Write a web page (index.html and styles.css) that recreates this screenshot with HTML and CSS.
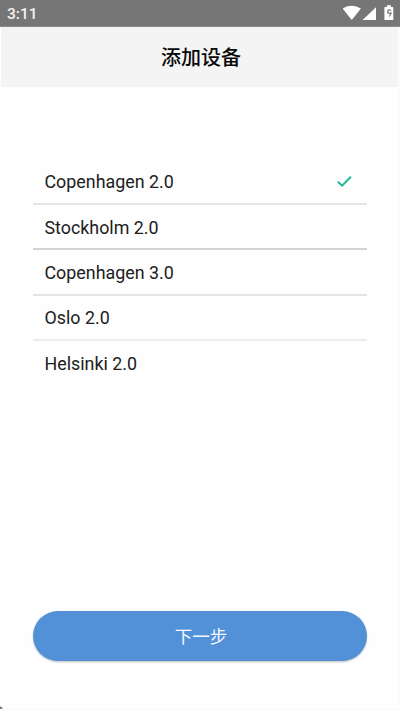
FILE: index.html
```html
<!DOCTYPE html>
<html lang="zh-CN">
<head>
<meta charset="utf-8">
<title>添加设备</title>
<link rel="stylesheet" href="styles.css">
</head>
<body>
<div class="screen">
  <div class="status">
    <span class="time">3:11</span>
    <svg class="status-icons" width="56" height="27" viewBox="0 0 56 27" fill="#fff">
      <path d="M-.4 8.5Q9 3.2 17.9 8.5L8.8 20Z"/>
      <path d="M33 7.2V20H19.5Z"/>
      <path d="M42.1 7H43.9V5.3H47.9V7H49.6Q50.3 7 50.3 7.7V19.4Q50.3 20.1 49.6 20.1H42.1Q41.4 20.1 41.4 19.4V7.7Q41.4 7 42.1 7Z"/>
      <path d="M48.2 10.2H45V13.2H48.2L46.3 16.5" fill="none" stroke="#767676" stroke-width="1.2"/>
    </svg>
  </div>
  <header class="header"><h1>添加设备</h1></header>
  <main class="content">
    <ul class="devices">
      <li><span>Copenhagen 2.0</span>
        <svg class="check" width="16" height="14" viewBox="0 0 16 14"><path d="M.8 6.8L5.1 10.7L13.9 1.8" fill="none" stroke="#22b799" stroke-width="2"/></svg>
      </li>
      <li class="strong"><span>Stockholm 2.0</span></li>
      <li><span>Copenhagen 3.0</span></li>
      <li class="light"><span>Oslo 2.0</span></li>
      <li><span>Helsinki 2.0</span></li>
    </ul>
    <button class="next">下一步</button>
  </main>
</div>
</body>
</html>
```
FILE: styles.css
```css
* { box-sizing: border-box; }
body {
  margin: 0;
  background: #fefefe;
  font-family: Roboto, "Noto Sans CJK SC", sans-serif;
  color: #202020;
}
.screen {
  height: 710px;
  display: flex;
  flex-direction: column;
  border-right: 1px solid #fafafa;
  border-bottom: 1px solid #fafafa;
  background: radial-gradient(circle at 0 100%, #777 0 2px, transparent 3px);
}
.status {
  height: 27px;
  flex: none;
  margin-right: -1px;
  padding: 0 1px 0 7px;
  display: flex;
  justify-content: space-between;
  background: #767676;
  border-bottom: 1px solid #8c8c8c;
}
.time {
  color: #f2f2f2;
  font-size: 15.5px;
  font-weight: 500;
  line-height: 28px;
}
.status-icons { display: block; }
.header {
  height: 60px;
  flex: none;
  margin: 0 1px;
  display: flex;
  align-items: center;
  justify-content: center;
  background: #f4f4f4;
}
.header h1 {
  margin: 2px 0 0 3px;
  font-size: 20px;
  font-weight: 500;
  line-height: 30px;
  color: #080808;
}
.content {
  flex: 1;
  display: flex;
  flex-direction: column;
  padding: 72px 32px 48px 33px;
}
.devices {
  margin: 0;
  padding: 0;
  list-style: none;
}
.devices li {
  height: 45.4px;
  padding: 1px 14px 0 11.5px;
  display: flex;
  align-items: center;
  justify-content: space-between;
  font-size: 17.85px;
  border-bottom: 2px solid #e4e4e4;
}
.devices li:first-child { height: 46px; }
.devices li.strong { border-color: #d2d2d2; }
.devices li.light { border-color: #ececec; }
.devices li:last-child { border-color: transparent; }
.check { display: block; }
.next {
  height: 50px;
  margin-top: auto;
  padding: 1px 0 0 2px;
  border: 0;
  border-radius: 25px;
  background: #5291d7;
  color: #f5f9ff;
  font: 400 17.5px/50px Roboto, "Noto Sans CJK SC", sans-serif;
  box-shadow: 0 1px 2px rgba(0, 0, 0, .25);
}
```
